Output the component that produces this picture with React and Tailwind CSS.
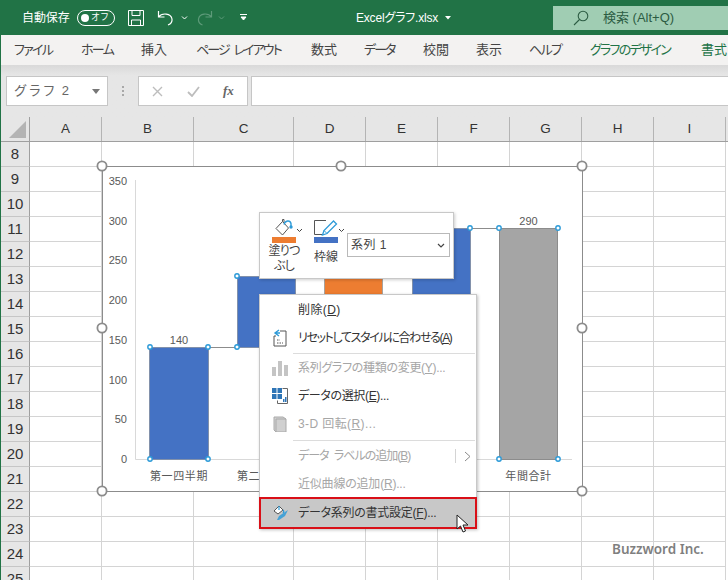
const COLS = [
  { name: "A", w: "w-[72px]" },
  { name: "B", w: "w-[92px]" },
  { name: "C", w: "w-[100px]" },
  { name: "D", w: "w-[72px]" },
  { name: "E", w: "w-[72px]" },
  { name: "F", w: "w-[72px]" },
  { name: "G", w: "w-[72px]" },
  { name: "H", w: "w-[72px]" },
  { name: "I", w: "w-[72px]" },
];
const ROWS = [8, 9, 10, 11, 12, 13, 14, 15, 16, 17, 18, 19, 20, 21, 22, 23, 24, 25];
const TABS = [
  ["ファイル", "w-[67px] tracking-[-1.7px]"],
  ["ホーム", "w-[60px] tracking-[-1.7px]"],
  ["挿入", "w-[55px]"],
  ["ページ レイアウト", "w-[115px] tracking-[-1.9px] [word-spacing:3px]"],
  ["数式", "w-[53px]"],
  ["データ", "w-[59px] tracking-[-1.9px]"],
  ["校閲", "w-[53px]"],
  ["表示", "w-[53px]"],
  ["ヘルプ", "w-[61px] tracking-[-1.6px]"],
];
const AXIS = [
  ["350", 181],
  ["300", 221],
  ["250", 260],
  ["200", 300],
  ["150", 340],
  ["100", 380],
  ["50", 419],
  ["0", 459],
];
const DOTS = [
  [150, 347], [208, 347], [150, 459], [208, 459], [237, 276], [237, 347],
  [470, 228], [499, 228], [558, 228], [499, 459], [558, 459],
];
const HANDLES = [
  [102, 166], [341, 166], [582, 166], [102, 328], [582, 328], [102, 491], [341, 491], [582, 491],
];

function Chart() {
  return (
    <div className="absolute left-[102px] top-[166px] w-[481px] h-[326px] bg-white border border-[#8c8c8c]">
      <svg className="absolute -left-px -top-px overflow-visible" width="481" height="326" viewBox="102 166 481 326">
        <g fontFamily="'Liberation Sans','Noto Sans CJK JP',sans-serif" fontSize="11" fill="#595959">
          {AXIS.map(([t, y]) => (
            <text key={t} x="127" y={y + 4} textAnchor="end">{t}</text>
          ))}
          <text x="179" y="344" textAnchor="middle">140</text>
          <text x="528.5" y="225" textAnchor="middle">290</text>
          <text x="179" y="480" textAnchor="middle" letterSpacing="0.6">第一四半期</text>
          <text x="266" y="480" textAnchor="middle" letterSpacing="0.6">第二四半期</text>
          <text x="528.5" y="480" textAnchor="middle" letterSpacing="0.6">年間合計</text>
        </g>
        <path d="M135.5 180V459.5H572" fill="none" stroke="#d9d9d9" />
        <path d="M208 347.5H237M470 228.5H499" fill="none" stroke="#8c8c8c" />
        <rect x="149.5" y="347.5" width="59" height="112" fill="#4472c4" stroke="#8291ab" />
        <rect x="237.5" y="276.5" width="58" height="71" fill="#4472c4" stroke="#8291ab" />
        <rect x="324.5" y="240.5" width="58" height="80" fill="#ed7d31" stroke="#a8a29c" />
        <rect x="412.5" y="228.5" width="58" height="120" fill="#4472c4" stroke="#8291ab" />
        <rect x="499.5" y="228.5" width="58" height="231" fill="#a5a5a5" stroke="#8c8c8c" />
        {DOTS.map(([x, y]) => (
          <circle key={x + "-" + y} cx={x} cy={y} r="2.2" fill="#fff" stroke="#2e9bd8" strokeWidth="1.4" />
        ))}
        {HANDLES.map(([x, y]) => (
          <circle key={x + "-" + y} cx={x} cy={y} r="4.6" fill="#fff" stroke="#8c8c8c" strokeWidth="1.8" />
        ))}
      </svg>
    </div>
  );
}

function MiniToolbar() {
  return (
    <div className="absolute left-[259px] top-[212px] w-[195px] h-[67px] bg-white border border-[#c8c8c8] shadow-[1px_1px_3px_rgba(0,0,0,0.2)] flex text-[#444]">
      <div className="w-[48px] flex flex-col items-center">
        <div className="relative w-[36px] h-[24px] pt-[6px] pl-[9px]">
          <svg width="20" height="17" viewBox="0 0 20 17">
            <path d="M1 9.500 7.500 2.500l6 6.500-6 7z" fill="#fff" stroke="#555" />
            <path d="M7.500 2.500V.5h1.500v3" fill="none" stroke="#555" />
            <path d="M9 5.500c1-4 6-5 7-1v2.500" fill="none" stroke="#2e9bd8" strokeWidth="1.4" />
            <circle cx="16" cy="8" r="1.700" fill="#2e9bd8" />
          </svg>
          <svg className="absolute left-[30px] top-[15px]" width="7" height="5" viewBox="0 0 7 5">
            <path d="M1 1l2.500 2.500L6 1" fill="none" stroke="#444" />
          </svg>
        </div>
        <div className="w-[24px] h-[6px] bg-[#ed7d31]" />
        <div className="mt-[1px] text-center text-[12px] leading-[15px] tracking-[-0.8px] [font-feature-settings:'palt']">塗りつ<br />ぶし</div>
      </div>
      <div className="w-[36px] flex flex-col items-center">
        <div className="relative w-[34px] h-[24px] pt-[7px] pl-[5px]">
          <svg width="24" height="16" viewBox="0 0 24 16">
            <path d="M.5 14.500V.5H12M.5 14.500H9" fill="none" stroke="#555" />
            <path d="M8.500 15l1.500-4.500L19.500 1l3 3-9.500 9.500z" fill="#fff" stroke="#2e9bd8" strokeWidth="1.3" />
            <path d="M10 10.500l3 3" stroke="#2e9bd8" />
          </svg>
          <svg className="absolute left-[29px] top-[15px]" width="7" height="5" viewBox="0 0 7 5">
            <path d="M1 1l2.500 2.500L6 1" fill="none" stroke="#444" />
          </svg>
        </div>
        <div className="w-[24px] h-[6px] bg-[#4472c4]" />
        <div className="mt-[6px] text-[12px] leading-[16px]">枠線</div>
      </div>
      <div className="ml-[3px] mt-[20px] w-[103px] h-[24px] border border-[#b9b9b9] flex items-center justify-between pl-[3px] pr-[4px] text-[12px]">
        <span className="tracking-[0.5px]">系列 1</span>
        <svg width="8" height="5" viewBox="0 0 8 5">
          <path d="M1 1l3 3 3-3" fill="none" stroke="#444" strokeWidth="1.2" />
        </svg>
      </div>
    </div>
  );
}

function MenuItem({ icon, disabled, children, className = "h-[28px]", track = "", arrow }) {
  return (
    <div className={"flex items-center " + className + (disabled ? " text-[#a6a6a6]" : " text-[#333]")}>
      <div className="w-[38px] flex justify-center pl-[2px] shrink-0">{icon}</div>
      <div className={"flex-1 whitespace-nowrap [font-feature-settings:'palt'] " + track}>{children}</div>
      {arrow && (
        <div className="flex items-center h-[14px] border-l border-[#d4d4d4] pl-[8px] pr-[5px]">
          <svg width="7" height="11" viewBox="0 0 7 11">
            <path d="M1 1l5 4.500L1 10" fill="none" stroke="#8a8a8a" />
          </svg>
        </div>
      )}
    </div>
  );
}

function ContextMenu() {
  return (
    <div className="absolute left-[259px] top-[294px] w-[218px] h-[235px] bg-white border border-[#c8c8c8] shadow-[1px_1px_3px_rgba(0,0,0,0.25)] pt-[1px] text-[12px]">
      <MenuItem track="tracking-[0.4px]">削除(<u>D</u>)</MenuItem>
      <MenuItem
        track="tracking-[-1.35px]"
        icon={
          <svg width="16" height="18" viewBox="0 0 16 18">
            <path d="M4 7H2v10h12V2H8" fill="none" stroke="#555" />
            <path d="M7 1L3 4l4 3M3 4h5" fill="none" stroke="#2e9bd8" strokeWidth="1.4" />
            <path d="M5 11h3M5 14h6" stroke="#555" strokeDasharray="1.5 1" />
          </svg>
        }
      >
        リセットしてスタイルに合わせる(<u>A</u>)
      </MenuItem>
      <div className="h-[2px] ml-[33px] mr-[1px] border-b border-[#dcdcdc]" />
      <MenuItem
        disabled
        track="tracking-[-0.3px]"
        icon={
          <svg width="16" height="16" viewBox="0 0 16 16">
            <path d="M0 7h4v9H0zM6 1h4v15H6zM12 5h4v11h-4z" fill="#c4c4c4" />
          </svg>
        }
      >
        系列グラフの種類の変更(<u>Y</u>)...
      </MenuItem>
      <MenuItem
        track="tracking-[-0.35px]"
        icon={
          <svg width="16" height="16" viewBox="0 0 16 16">
            <path d="M0 0h10v11H0z" fill="#2e75b6" />
            <path d="M0 5.500h10M5 0v11" fill="none" stroke="#fff" />
            <path d="M10.500 .5h5v15h-10v-3" fill="none" stroke="#666" />
            <path d="M11 14h1.500v-3H11zM13 14h1.500V9H13z" fill="#2e75b6" />
          </svg>
        }
      >
        データの選択(<u>E</u>)...
      </MenuItem>
      <MenuItem
        disabled
        track="tracking-[0.4px]"
        icon={
          <svg width="14" height="16" viewBox="0 0 14 16">
            <path d="M1 1h9l3 2v13H3l-2-2z" fill="#d0d0d0" stroke="#aaa" />
            <path d="M3 3h10M3 3v13" stroke="#aaa" />
          </svg>
        }
      >
        3-D 回転(<u>R</u>)...
      </MenuItem>
      <div className="h-[4px] ml-[33px] mr-[1px] pt-px">
        <div className="h-[2px] border-b border-[#dcdcdc]" />
      </div>
      <MenuItem disabled arrow track="tracking-[-1px] [word-spacing:3px]">
        データ ラベルの追加(<u>B</u>)
      </MenuItem>
      <MenuItem disabled className="h-[27px]" track="tracking-[-0.2px]">
        近似曲線の追加(<u>R</u>)...
      </MenuItem>
      <div className="-mx-px">
        <MenuItem
          className="h-[32px] border-2 border-[#d90f17] bg-[#c8c8c8]"
          track="tracking-[-0.25px] ml-[-1px]"
          icon={
            <svg width="17" height="16" viewBox="0 0 17 16">
              <path d="M1 6l5-5 4 4-5 4z" fill="#fff" stroke="#555" />
              <path d="M6 1v4M10 5c1 1 1 2 0 3" fill="none" stroke="#2e9bd8" strokeWidth="1.2" />
              <path d="M4 15l2-4 9-6-3 6-6 4z" fill="#2e9bd8" opacity="0.85" />
            </svg>
          }
        >
          データ系列の書式設定(<u>F</u>)...
        </MenuItem>
      </div>
    </div>
  );
}

export default function App() {
  return (
    <div className="relative w-[728px] h-[580px] overflow-hidden bg-white font-['Liberation_Sans','Noto_Sans_CJK_JP',sans-serif]">
      <div className="flex items-center h-[35px] bg-[#217346] text-white text-[12px]">
        <span className="ml-[22px] w-[55px] tracking-[-0.1px]">自動保存</span>
        <div className="flex items-center justify-between w-[38px] h-[16px] rounded-full border border-white px-[3px]">
          <div className="w-[8px] h-[8px] rounded-full bg-white" />
          <span className="text-[9px] leading-none pr-[2px]">オフ</span>
        </div>
        <svg className="ml-[13px]" width="16" height="16" viewBox="0 0 16 16">
          <path d="M.5.5h15v15H.500zM4 .5v5h8v-5M3.500 15.500V10h9v5.500" fill="none" stroke="#fff" />
        </svg>
        <svg className="ml-[13px]" width="17" height="16" viewBox="0 0 17 16">
          <path d="M1.500 1v6h6M1.500 7C5 2.500 14 3 15 9c.4 3-1.500 5-4 6" fill="none" stroke="#fff" strokeWidth="1.2" />
        </svg>
        <svg className="ml-[7px]" width="7" height="4" viewBox="0 0 7 4">
          <path d="M1 .500l2.500 2.500L6 .500" fill="none" stroke="#fff" />
        </svg>
        <svg className="ml-[9px]" width="16" height="16" viewBox="0 0 16 16">
          <path d="M14.500 1v6h-6M14.500 7C11 2.500 2.500 3 1.500 9c-.4 3 1.500 5 4 6" fill="none" stroke="#5d9a79" strokeWidth="1.2" />
        </svg>
        <svg className="ml-[5px]" width="7" height="4" viewBox="0 0 7 4">
          <path d="M1 .500l2.500 2.500L6 .500" fill="none" stroke="#5d9a79" />
        </svg>
        <svg className="ml-[15px]" width="7" height="7" viewBox="0 0 7 7">
          <path d="M0 .500h7M1 3l2.500 3L6 3z" fill="#fff" stroke="#fff" />
        </svg>
        <span className="ml-[109px] w-[83px] tracking-[-0.2px] whitespace-nowrap [font-feature-settings:'palt']">Excelグラフ.xlsx</span>
        <svg className="ml-[6px]" width="6" height="4" viewBox="0 0 6 4">
          <path d="M0 0h6L3 3.500z" fill="#fff" />
        </svg>
        <div className="ml-[102px] flex-1 h-[24px] bg-[#a0cdb3] flex items-center pl-[20px] text-[#2c5c43]">
          <svg width="16" height="16" viewBox="0 0 16 16">
            <circle cx="10" cy="6" r="4.800" fill="none" stroke="#2c5c43" strokeWidth="1.1" />
            <path d="M6.500 9.500 1 15" stroke="#2c5c43" strokeWidth="1.1" />
          </svg>
          <span className="ml-[14px] text-[13px]">検索 (Alt+Q)</span>
        </div>
      </div>

      <div className="flex flex-col border-l border-[#217346]">
        <div className="flex items-center h-[30px] bg-[#f3f2f1] pl-[13px] text-[13px] text-[#444] [font-feature-settings:'palt'] whitespace-nowrap">
          {TABS.map(([t, w]) => (
            <span key={t} className={w}>{t}</span>
          ))}
          <span className="w-[111px] text-[#217346] tracking-[-1.75px]">グラフのデザイン</span>
          <span className="text-[#217346]">書式</span>
        </div>

        <div className="flex h-[52px] pt-[11px] bg-gradient-to-b from-[#d9d9d9] from-0% to-[#e6e6e6] to-[20%]">
          <div className="ml-[5px] w-[102px] h-[30px] bg-white border border-[#c6c6c6] flex items-center justify-between pl-[7px] pr-[7px] text-[13px] text-[#666] tracking-[1.300px]">
            <span>グラフ 2</span>
            <svg width="8" height="5" viewBox="0 0 8 5">
              <path d="M0 0h8L4 5z" fill="#777" />
            </svg>
          </div>
          <div className="w-[30px] h-[30px] flex flex-col items-center justify-center gap-[2px]">
            <div className="w-[2px] h-[2px] bg-[#a8a8a8]" />
            <div className="w-[2px] h-[2px] bg-[#a8a8a8]" />
            <div className="w-[2px] h-[2px] bg-[#a8a8a8]" />
          </div>
          <div className="w-[110px] h-[30px] bg-white border border-[#c6c6c6] flex items-center pl-[13px]">
            <svg width="11" height="11" viewBox="0 0 11 11">
              <path d="M1 1l9 9M10 1l-9 9" stroke="#bdbdbd" strokeWidth="1.4" />
            </svg>
            <svg className="ml-[24px]" width="13" height="11" viewBox="0 0 13 11">
              <path d="M1 6l4 4 7-9" fill="none" stroke="#bdbdbd" strokeWidth="1.8" />
            </svg>
            <span className="ml-[23px] font-['Liberation_Serif',serif] italic font-bold text-[13px] text-[#666]">fx</span>
          </div>
          <div className="ml-[3px] flex-1 h-[30px] bg-white border border-[#c6c6c6] border-r-0" />
        </div>

        <div className="flex h-[25px] bg-[#e6e6e6] border-b border-[#9f9f9f] text-[13.500px] text-[#333]">
          <div className="w-[29px] border-r border-[#9f9f9f] shrink-0 pl-[8px] pt-[4px]">
            <svg width="18" height="17" viewBox="0 0 18 17">
              <path d="M17 0v17H0z" fill="#b4b4b4" />
            </svg>
          </div>
          {COLS.map((c) => (
            <div key={c.name} className={c.w + " shrink-0 flex items-center justify-center border-r border-[#b4b4b4]"}>
              {c.name}
            </div>
          ))}
        </div>

        {ROWS.map((r) => (
          <div key={r} className="flex h-[25px]">
            <div className="w-[29px] shrink-0 bg-[#e6e6e6] border-r border-b border-r-[#9f9f9f] border-b-[#c6c6c6] flex items-center justify-center text-[15px] text-[#333]">
              {r}
            </div>
            {COLS.map((c) => (
              <div key={c.name} className={c.w + " shrink-0 border-r border-b border-[#d4d4d4]"} />
            ))}
          </div>
        ))}
      </div>

      <Chart />
      <MiniToolbar />
      <ContextMenu />

      <svg className="absolute left-[456px] top-[514px]" width="13" height="19" viewBox="0 0 13 19">
        <path d="M1 1v14l3.500-3 2.500 6 2.500-1-2.500-6H12z" fill="#fff" stroke="#222" />
      </svg>

      <div className="absolute left-[612px] top-[539px] font-['Noto_Sans',sans-serif] font-semibold text-[13.500px] leading-[20px] text-[#7f7f7f]">
        Buzzword Inc.
      </div>
    </div>
  );
}
